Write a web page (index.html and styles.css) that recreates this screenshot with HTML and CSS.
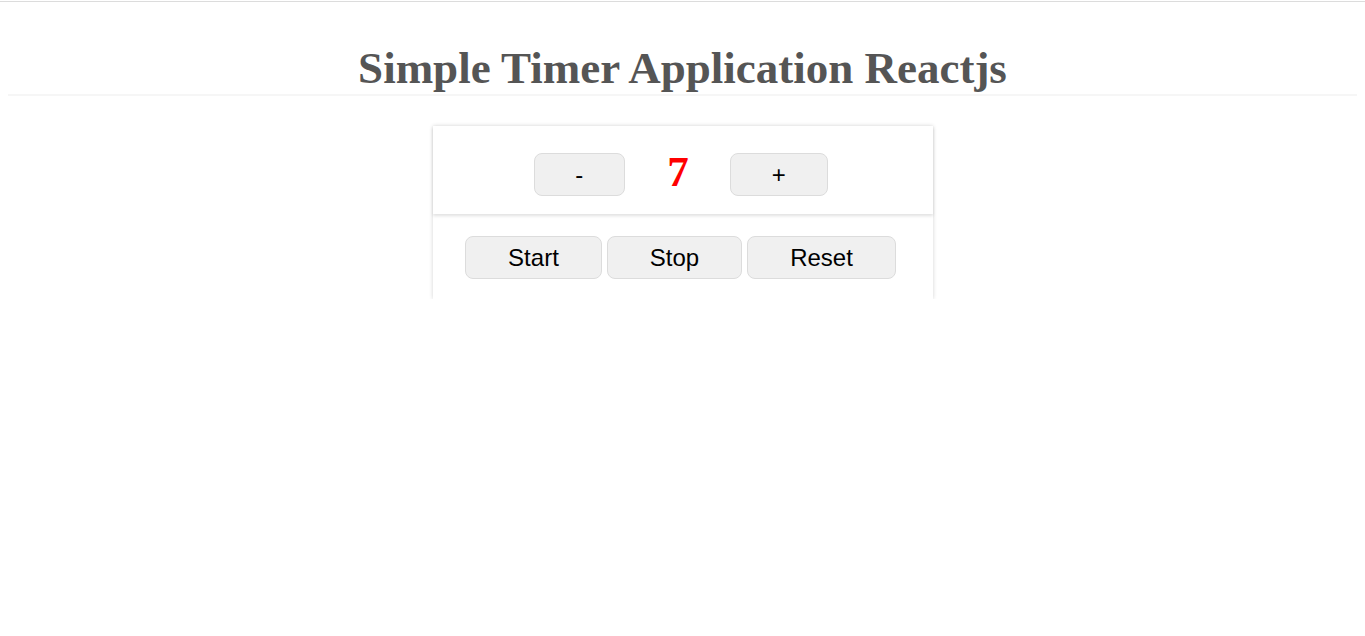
FILE: index.html
```html
<!DOCTYPE html>
<html>
<head>
<meta charset="utf-8">
<link rel="stylesheet" href="styles.css">
</head>
<body>
<div class="topline"></div>
<div class="page">
  <h1 class="title">Simple Timer Application Reactjs</h1>
  <div class="card">
    <div class="counter">
      <button class="btn btn-minus">-</button>
      <span class="value">7</span>
      <button class="btn btn-plus">+</button>
    </div>
    <div class="controls">
      <button class="btn">Start</button>
      <button class="btn">Stop</button>
      <button class="btn">Reset</button>
    </div>
  </div>
</div>
</body>
</html>
```
FILE: styles.css
```css
html, body {
  margin: 0;
  padding: 0;
  background: #fff;
}
.topline {
  margin-top: 1px;
  height: 1px;
  background: #dcdcdc;
}
.page {
  padding: 0 8px;
}
.title {
  margin: 0;
  padding-top: 40px;
  height: 52px;
  line-height: 52px;
  font-family: "Liberation Serif", serif;
  font-weight: bold;
  font-size: 45px;
  color: #555;
  text-align: center;
  border-bottom: 2px solid #f6f6f6;
}
.card {
  width: 500px;
  margin: 30px auto 0;
  box-shadow: 0 0 4px rgba(0, 0, 0, 0.18);
  background: #fff;
}
.counter {
  display: flex;
  align-items: center;
  justify-content: center;
  padding: 27px 3px 18px 0;
  box-shadow: 0 2px 3px rgba(0, 0, 0, 0.12);
  position: relative;
}
.value {
  font-family: "Liberation Serif", serif;
  font-weight: bold;
  font-size: 43px;
  color: #ff0000;
  margin: 0 41px 0 42px;
  line-height: 43px;
  position: relative;
  top: -3px;
}
.controls {
  display: flex;
  justify-content: center;
  gap: 5px;
  padding: 22px 4px 20px 0;
}
.btn {
  font-family: "Liberation Sans", Arial, sans-serif;
  font-size: 24px;
  line-height: 27px;
  height: 43px;
  padding: 7px 42px;
  background: #f0f0f0;
  border: 1px solid #dcdcdc;
  border-radius: 8px;
  color: #000;
}
.btn-minus {
  padding: 7px 41px 7px 40px;
}
.btn-plus {
  padding: 7px 41px;
}
```
